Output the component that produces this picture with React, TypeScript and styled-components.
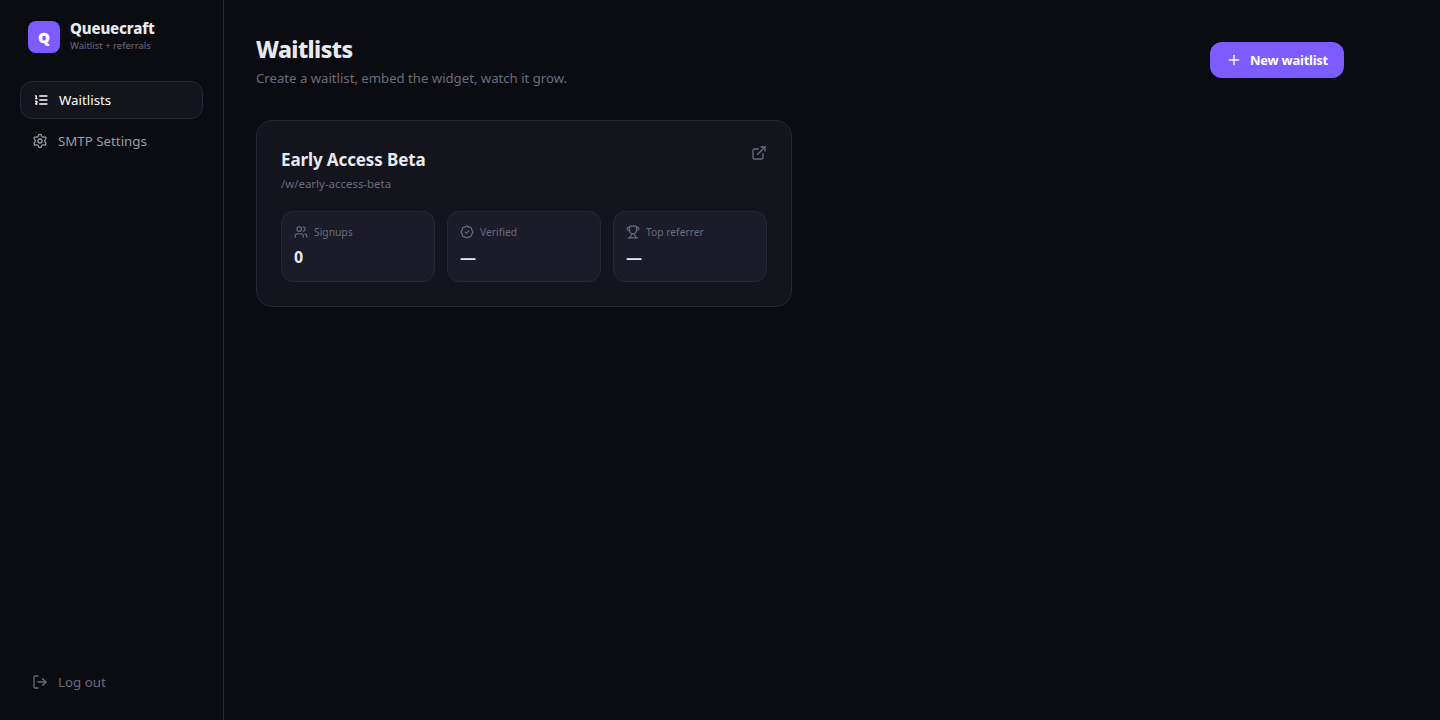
import React from "react";
import styled, { createGlobalStyle } from "styled-components";
import { Settings, LogOut, Plus, ExternalLink, Users, BadgeCheck, Trophy } from "lucide-react";

const Global = createGlobalStyle`
  *, *::before, *::after { box-sizing: border-box; }
  body { margin: 0; background: #0b0c11; color: #e8e8f0; font-family: "Noto Sans", "Open Sans", sans-serif; font-size: 13.2px; line-height: 20px; overflow: hidden; }
  h1, h2, p { margin: 0; }
  button { font: inherit; border: 0; cursor: pointer; }
`;
const Shell = styled.div`display: flex; height: 100vh;`;
const Sidebar = styled.aside`
  width: 224px; flex: none; display: flex; flex-direction: column;
  padding: 20px; border-right: 1px solid #272735;
`;
const Brand = styled.div`display: flex; align-items: center; gap: 10px; padding: 0 8px; height: 34px;`;
const Logo = styled.div`
  width: 32px; height: 32px; border-radius: 8px; background: #7c5cff; color: #fff;
  display: grid; place-items: center; font-weight: 900; font-size: 14.5px;
  -webkit-text-stroke: 0.4px #fff;
`;
const BrandText = styled.div`padding-bottom: 3px;`;
const BrandName = styled.div`font-weight: 800; font-size: 15px; line-height: 19px; letter-spacing: -0.17px;`;
const BrandTag = styled.div`font-size: 9.5px; line-height: 15px; color: #6b6b7b;`;
const Nav = styled.nav`display: flex; flex-direction: column; gap: 4px; margin-top: 27px; flex: 1;`;
const NavItem = styled.a<{ $active?: boolean; $muted?: boolean }>`
  display: flex; align-items: center; gap: 10px; height: ${(p) => (p.$active ? 38 : 36)}px; padding: 0 12px;
  border-radius: 12px; font-size: 13.3px;
  color: ${(p) => (p.$active ? "#fff" : p.$muted ? "#6b6b7b" : "#9a9aa8")};
  ${(p) => p.$active && "background: #14141d; border: 1px solid #272735;"}
`;
const Main = styled.main`flex: 1; padding: 32px 96px 32px 32px;`;
const Header = styled.header`display: flex; justify-content: space-between; align-items: center; height: 56px;`;
const Title = styled.h1`font-size: 23px; line-height: 32px; font-weight: 800; letter-spacing: -0.6px; padding-top: 1px;`;
const Subtitle = styled.p`margin-top: 3px; font-size: 13.17px; color: #6b6b7b;`;
const Primary = styled.button`
  display: flex; align-items: center; gap: 8px; width: 134px; height: 36px; padding: 0 16px; border-radius: 12px;
  background: #7c5cff; color: #fff; font-weight: 700; font-size: 13px; letter-spacing: -0.25px; white-space: nowrap;
  svg { flex: none; }
`;
const Card = styled.section`
  margin-top: 32px; width: 536px; height: 187px; padding: 24px;
  border: 1px solid #272735; border-radius: 16px; background: #14141d;
`;
const CardHead = styled.div`display: flex; justify-content: space-between; color: #6b6b7b;`;
const CardTitle = styled.h2`font-size: 17px; line-height: 28px; font-weight: 700; letter-spacing: -0.11px; padding-top: 1px; color: #e8e8f0;`;
const Slug = styled.p`font-size: 11.45px; line-height: 16px; margin-top: 2px;`;
const Stats = styled.div`display: grid; grid-template-columns: repeat(3, 1fr); gap: 12px; margin-top: 19px;`;
const Stat = styled.div`height: 71px; border: 1px solid #272735; border-radius: 12px; background: #1c1b28; padding: 12px;`;
const StatLabel = styled.div`display: flex; align-items: center; gap: 6px; color: #6b6b7b; font-size: 10.3px; line-height: 16px;`;
const StatValue = styled.div`font-size: 16px; line-height: 24px; font-weight: 700; margin-top: 5px;`;

const ListIcon = () => (
  <svg width="16" height="16" viewBox="0 0 24 24" fill="none" stroke="currentColor" strokeWidth="2" strokeLinecap="round" strokeLinejoin="round">
    <path d="M10 6h11M10 12h11M10 18h11M4 6h1v4M4 10h2M6 18H4c0-1 2-2 2-3s-1-1.5-2-1" />
  </svg>
);

const stats = [
  { icon: Users, label: "Signups", value: "0" },
  { icon: BadgeCheck, label: "Verified", value: "—" },
  { icon: Trophy, label: "Top referrer", value: "—" },
];

export default function App() {
  return (
    <Shell>
      <Global />
      <Sidebar>
        <Brand>
          <Logo>Q</Logo>
          <BrandText><BrandName>Queuecraft</BrandName><BrandTag>Waitlist + referrals</BrandTag></BrandText>
        </Brand>
        <Nav>
          <NavItem $active><ListIcon />Waitlists</NavItem>
          <NavItem><Settings size={16} />SMTP Settings</NavItem>
        </Nav>
        <NavItem $muted><LogOut size={16} />Log out</NavItem>
      </Sidebar>
      <Main>
        <Header>
          <div><Title>Waitlists</Title><Subtitle>Create a waitlist, embed the widget, watch it grow.</Subtitle></div>
          <Primary><Plus size={16} />New waitlist</Primary>
        </Header>
        <Card>
          <CardHead>
            <div><CardTitle>Early Access Beta</CardTitle><Slug>/w/early-access-beta</Slug></div>
            <ExternalLink size={16} />
          </CardHead>
          <Stats>
            {stats.map(({ icon: Icon, label, value }) => (
              <Stat key={label}><StatLabel><Icon size={14} />{label}</StatLabel><StatValue>{value}</StatValue></Stat>
            ))}
          </Stats>
        </Card>
      </Main>
    </Shell>
  );
}
